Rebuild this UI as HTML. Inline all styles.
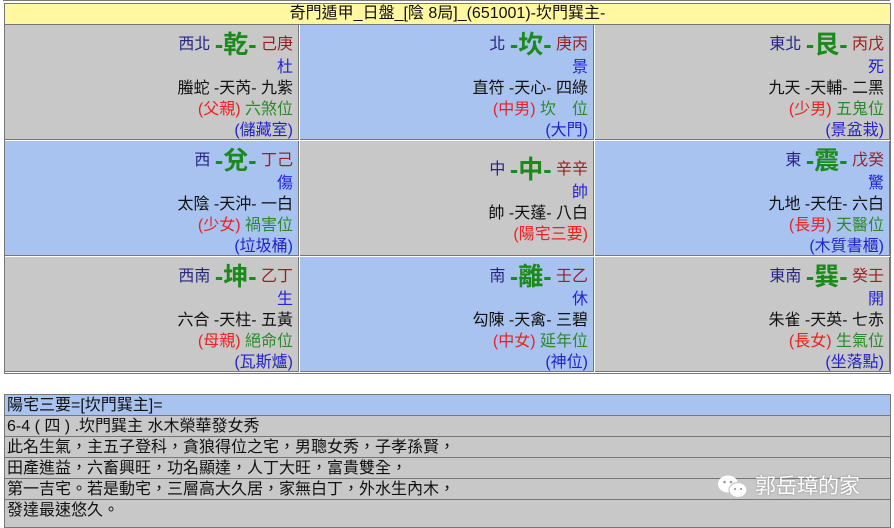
<!DOCTYPE html>
<html><head><meta charset="utf-8"><style>
body{margin:0;width:894px;height:528px;background:#fff;position:relative;overflow:hidden;font-family:"Liberation Sans","Noto Sans CJK TC",sans-serif;font-size:16px;}
.c{position:absolute;width:294px;height:115px;text-align:right;box-sizing:border-box;padding-right:5px;border-right:1px solid #777;border-bottom:1px solid #777;}
.g{background:#c8c8c8}.b{background:#a9c3f0}
.l{height:21px;line-height:21px;white-space:nowrap}
.f{height:24px;line-height:24px;margin-top:8px;overflow:visible}
.f span{display:inline-block;line-height:24px;height:24px;vertical-align:top}
.d{color:#262680}.k{color:#1a8a1a;font-size:25px;font-weight:bold}.s{color:#9a2020}
.m{color:#2222dd}.r{color:#ee2020}.gr{color:#2a8a2a}.bl{color:#2222cc}.bk{color:#111}
.row{position:absolute;left:5px;width:885px;height:21px;line-height:21px;border-bottom:1px solid #777;box-sizing:border-box;padding-left:2px;color:#111;font-size:16px}
</style></head><body>
<div style="position:absolute;left:3px;top:0;width:887px;height:3px;border-top:1px solid #777"></div>
<div style="position:absolute;left:4px;top:3px;width:887px;height:371px;border:1px solid #777;box-sizing:border-box"></div>
<div style="position:absolute;left:5px;top:4px;width:885px;height:21px;background:#fff8a0;border-bottom:1px solid #777;box-sizing:border-box;text-align:center;line-height:20px;color:#111">奇門遁甲_日盤_[陰 8局]_(651001)-坎門巽主-</div>

<div class="c g" style="left:5px;top:25px"><div class="l f"><span class="d">西北</span> <span class="k">-乾-</span> <span class="s">己庚</span></div><div class="l m">杜</div><div class="l bk">螣蛇 -天芮- 九紫</div><div class="l"><span class="r">(父親)</span> <span class="gr">六煞位</span></div><div class="l bl">(儲藏室)</div></div>
<div class="c b" style="left:300px;top:25px"><div class="l f"><span class="d">北</span> <span class="k">-坎-</span> <span class="s">庚丙</span></div><div class="l m">景</div><div class="l bk">直符 -天心- 四綠</div><div class="l"><span class="r">(中男)</span> <span class="gr">坎　位</span></div><div class="l bl">(大門)</div></div>
<div class="c g" style="left:595px;top:25px;width:295px"><div class="l f"><span class="d">東北</span> <span class="k">-艮-</span> <span class="s">丙戊</span></div><div class="l m">死</div><div class="l bk">九天 -天輔- 二黑</div><div class="l"><span class="r">(少男)</span> <span class="gr">五鬼位</span></div><div class="l bl">(景盆栽)</div></div>

<div class="c b" style="left:5px;top:141px"><div class="l f"><span class="d">西</span> <span class="k">-兌-</span> <span class="s">丁己</span></div><div class="l m">傷</div><div class="l bk">太陰 -天沖- 一白</div><div class="l"><span class="r">(少女)</span> <span class="gr">禍害位</span></div><div class="l bl">(垃圾桶)</div></div>
<div class="c g" style="left:300px;top:141px"><div class="l f" style="margin-top:17px"><span class="d">中</span> <span class="k">-中-</span> <span class="s">辛辛</span></div><div class="l m">帥</div><div class="l bk">帥 -天蓬- 八白</div><div class="l r">(陽宅三要)</div></div>
<div class="c b" style="left:595px;top:141px;width:295px"><div class="l f"><span class="d">東</span> <span class="k">-震-</span> <span class="s">戊癸</span></div><div class="l m">驚</div><div class="l bk">九地 -天任- 六白</div><div class="l"><span class="r">(長男)</span> <span class="gr">天醫位</span></div><div class="l bl">(木質書櫃)</div></div>

<div class="c g" style="left:5px;top:257px"><div class="l f"><span class="d">西南</span> <span class="k">-坤-</span> <span class="s">乙丁</span></div><div class="l m">生</div><div class="l bk">六合 -天柱- 五黃</div><div class="l"><span class="r">(母親)</span> <span class="gr">絕命位</span></div><div class="l bl">(瓦斯爐)</div></div>
<div class="c b" style="left:300px;top:257px"><div class="l f"><span class="d">南</span> <span class="k">-離-</span> <span class="s">壬乙</span></div><div class="l m">休</div><div class="l bk">勾陳 -天禽- 三碧</div><div class="l"><span class="r">(中女)</span> <span class="gr">延年位</span></div><div class="l bl">(神位)</div></div>
<div class="c g" style="left:595px;top:257px;width:295px"><div class="l f"><span class="d">東南</span> <span class="k">-巽-</span> <span class="s">癸壬</span></div><div class="l m">開</div><div class="l bk">朱雀 -天英- 七赤</div><div class="l"><span class="r">(長女)</span> <span class="gr">生氣位</span></div><div class="l bl">(坐落點)</div></div>

<div style="position:absolute;left:4px;top:394px;width:887px;height:134px;border:1px solid #777;border-bottom:none;box-sizing:border-box"></div>
<div class="row" style="top:395px;background:#a9c3f0">陽宅三要=[坎門巽主]=</div>
<div class="row" style="top:416px;background:#c8c8c8">6-4 ( 四 ) .坎門巽主 水木榮華發女秀</div>
<div class="row" style="top:437px;background:#c8c8c8">此名生氣，主五子登科，貪狼得位之宅，男聰女秀，子孝孫賢，</div>
<div class="row" style="top:458px;background:#c8c8c8">田產進益，六畜興旺，功名顯達，人丁大旺，富貴雙全，</div>
<div class="row" style="top:479px;background:#c8c8c8">第一吉宅。若是動宅，三層高大久居，家無白丁，外水生內木，</div>
<div class="row" style="top:500px;background:#c8c8c8;height:28px">發達最速悠久。</div>
<div style="position:absolute;left:716px;top:473px;width:34px;height:28px">
<svg width="34" height="28" viewBox="0 0 34 28"><ellipse cx="12" cy="11" rx="10" ry="8.5" fill="#fff"/><ellipse cx="22" cy="17" rx="9" ry="7.5" fill="#fff" stroke="#c8c8c8" stroke-width="1.2"/><circle cx="8.5" cy="9" r="1.3" fill="#999"/><circle cx="15" cy="9" r="1.3" fill="#999"/><circle cx="19" cy="16" r="1.1" fill="#999"/><circle cx="25" cy="16" r="1.1" fill="#999"/></svg></div>
<div style="position:absolute;left:755px;top:474px;color:#fff;font-size:21px;line-height:26px;text-shadow:0 0 2px #888">郭岳璋的家</div>
</body></html>
